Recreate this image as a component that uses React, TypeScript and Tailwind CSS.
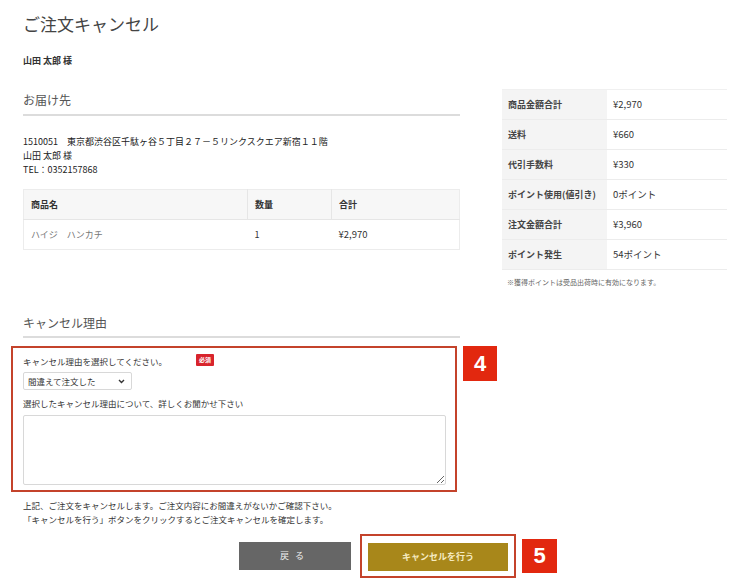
const summary = [
  ["商品金額合計", "¥2,970"],
  ["送料", "¥660"],
  ["代引手数料", "¥330"],
  ["ポイント使用(値引き)", "0ポイント"],
  ["注文金額合計", "¥3,960"],
  ["ポイント発生", "54ポイント"],
]

export default function App() {
  return (
    <div className="w-[750px] h-[585px] bg-white text-[#333] pl-[23px] pt-[12px] font-['Noto_Sans_CJK_JP','Noto_Sans',sans-serif]">
      <h1 className="text-[17px] leading-[24px] text-[#444]">ご注文キャンセル</h1>
      <p className="mt-[18px] text-[9px] leading-[14px] font-bold">山田 太郎 様</p>

      <div className="flex mt-[21px]">
        {/* left column */}
        <div className="w-[437px]">
          <h2 className="pt-[2px] pb-[5px] text-[12px] leading-[18px] text-[#555] border-b-2 border-[#dcdcdc]">お届け先</h2>
          <div className="mt-[19px] text-[9px] leading-[14px] text-[#222]">
            <p>1510051　東京都渋谷区千駄ヶ谷５丁目２７－５リンクスクエア新宿１１階</p>
            <p>山田 太郎 様</p>
            <p>TEL：0352157868</p>
          </div>
          <table className="mt-[12px] w-full border border-[#ececec] border-collapse text-[9px]">
            <thead>
              <tr className="h-[30px] bg-[#f7f7f7] text-left">
                <th className="w-[224px] pl-[7px] font-bold border-r border-[#e6e6e6]">商品名</th>
                <th className="w-[84px] pl-[7px] font-bold border-r border-[#e6e6e6]">数量</th>
                <th className="pl-[7px] font-bold">合計</th>
              </tr>
            </thead>
            <tbody>
              <tr className="h-[30px] border-t border-[#e6e6e6]">
                <td className="pl-[7px] text-[#777]">ハイジ　ハンカチ</td>
                <td className="pl-[7px]">1</td>
                <td className="pl-[7px] text-[9.5px]">¥2,970</td>
              </tr>
            </tbody>
          </table>
        </div>

        {/* right column */}
        <div className="ml-[42px] w-[225px]">
          <div className="border-t border-[#f0f0f0]">
            {summary.map(([k, v]) => (
              <div key={k} className="flex h-[30px] border-b border-[#ececec]">
                <div className="w-[105px] bg-[#f4f4f4] pl-[6px] flex items-center text-[9px] font-bold text-[#444]">{k}</div>
                <div className="flex-1 pl-[6px] flex items-center text-[9.5px]">{v}</div>
              </div>
            ))}
          </div>
          <p className="mt-[7px] pl-[5px] text-[7px] leading-[10px] text-[#666]">※獲得ポイントは受品出荷時に有効になります。</p>
        </div>
      </div>

      {/* cancel reason */}
      <div className="w-[437px] mt-[27px]">
        <h2 className="pb-[4px] text-[12px] leading-[18px] text-[#555] border-b-2 border-[#dcdcdc]">キャンセル理由</h2>
      </div>

      <div className="flex items-start mt-[8px] -ml-[12px]">
        <div className="w-[446px] border-2 border-[#c4432b] pl-[10px] pr-[9px] pt-[6px] pb-[5px]">
          <div className="flex items-center h-[14px] text-[8.5px] text-[#333]">
            <span>キャンセル理由を選択してください。</span>
            <span className="ml-[29px] -mt-[3px] h-[12px] px-[3px] bg-[#d8242c] text-white text-[6px] font-bold leading-[12px] rounded-[1px]">必須</span>
          </div>
          <div className="mt-[4px] w-[109px] h-[18px] border border-[#d8d8d8] rounded-[2px] flex items-center justify-between pl-[4px] pr-[6px] text-[8.5px]">
            <span>間違えて注文した</span>
            <svg width="7" height="5" viewBox="0 0 7 5"><path d="M1 1l2.5 2.5L6 1" stroke="#333" strokeWidth="1.4" fill="none" /></svg>
          </div>
          <p className="mt-[6px] text-[8.5px] leading-[14px]">選択したキャンセル理由について、詳しくお聞かせ下さい</p>
          <textarea className="mt-[5px] block w-[423px] h-[70px] border border-[#d8d8d8] rounded-[2px] resize-y" />
        </div>
        <div className="ml-[6px] w-[34px] h-[35px] bg-[#e2280f] text-white text-[22px] font-bold flex items-center justify-center font-['Liberation_Sans',sans-serif]">4</div>
      </div>

      <div className="mt-[6px] text-[8.5px] leading-[14px] text-[#333]">
        <p>上記、ご注文をキャンセルします。ご注文内容にお間違えがないかご確認下さい。</p>
        <p>「キャンセルを行う」ボタンをクリックするとご注文キャンセルを確定します。</p>
      </div>

      <div className="flex items-center mt-[8px]">
        <button className="ml-[216px] w-[112px] h-[28px] bg-[#666] text-[#eee] text-[9px] tracking-[6px]">戻る</button>
        <div className="ml-[9px] border-2 border-[#c4432b] px-[6px] py-[5px]">
          <button className="w-[140px] h-[28px] bg-[#a8871a] text-[#f6ebc2] text-[9px] font-bold">キャンセルを行う</button>
        </div>
        <div className="ml-[6px] w-[35px] h-[34px] bg-[#e2280f] text-white text-[22px] font-bold flex items-center justify-center font-['Liberation_Sans',sans-serif]">5</div>
      </div>
    </div>
  )
}
